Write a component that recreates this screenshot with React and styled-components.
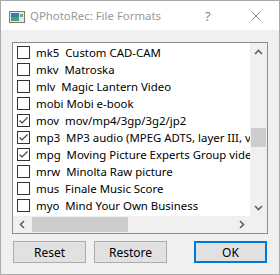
import React from 'react';
import styled, { createGlobalStyle } from 'styled-components';

const formats = [
  { ext: 'mk5', desc: 'Custom CAD-CAM', on: false },
  { ext: 'mkv', desc: 'Matroska', on: false },
  { ext: 'mlv', desc: 'Magic Lantern Video', on: false },
  { ext: 'mobi', desc: 'Mobi e-book', on: false },
  { ext: 'mov', desc: 'mov/mp4/3gp/3g2/jp2', on: true },
  { ext: 'mp3', desc: 'MP3 audio (MPEG ADTS, layer III, v1)', on: true },
  { ext: 'mpg', desc: 'Moving Picture Experts Group video', on: true },
  { ext: 'mrw', desc: 'Minolta Raw picture', on: false },
  { ext: 'mus', desc: 'Finale Music Score', on: false },
  { ext: 'myo', desc: 'Mind Your Own Business', on: false },
];

const App = () => {
  return (
    <>
      <GlobalStyle />
      <Window>
        <TitleBar>
          <AppIcon width="16" height="12" viewBox="0 0 16 12">
            <rect x="0.5" y="0.5" width="15" height="11" fill="#e8e8e8" stroke="#7a7a7a" />
            <rect x="2" y="2" width="8" height="8" fill="#3a7bb8" />
            <rect x="2" y="6" width="8" height="4" fill="#4aa36a" />
            <rect x="11" y="3" width="3" height="3" fill="#5dbb5d" />
          </AppIcon>
          <Title>QPhotoRec: File Formats</Title>
          <TitleButton>?</TitleButton>
          <CloseButton>
            <svg width="10" height="10" viewBox="0 0 10 10">
              <path d="M0.5 0.5 L9.5 9.5 M9.5 0.5 L0.5 9.5" stroke="#8a8a8a" strokeWidth="1" />
            </svg>
          </CloseButton>
        </TitleBar>
        <Body>
          <ListBox>
            <ListMain>
              <Rows>
                {formats.map((f) => (
                  <Row key={f.ext}>
                    <CheckBox>
                      {f.on && (
                        <svg width="11" height="11" viewBox="0 0 11 11">
                          <path d="M1.5 5.5 L4 8 L9.5 2.5" fill="none" stroke="#3c3c3c" strokeWidth="1.1" />
                        </svg>
                      )}
                    </CheckBox>
                    <Label>{`${f.ext.padEnd(4)} ${f.desc}`}</Label>
                  </Row>
                ))}
              </Rows>
              <VScroll>
                <Arrow>
                  <svg width="9" height="6" viewBox="0 0 9 6">
                    <path d="M1 5 L4.5 1.5 L8 5" fill="none" stroke="#606060" strokeWidth="1.6" />
                  </svg>
                </Arrow>
                <VTrack>
                  <VThumb />
                </VTrack>
                <Arrow>
                  <svg width="9" height="6" viewBox="0 0 9 6">
                    <path d="M1 1 L4.5 4.5 L8 1" fill="none" stroke="#606060" strokeWidth="1.6" />
                  </svg>
                </Arrow>
              </VScroll>
            </ListMain>
            <HScroll>
              <Arrow>
                <svg width="6" height="9" viewBox="0 0 6 9">
                  <path d="M5 1 L1.5 4.5 L5 8" fill="none" stroke="#606060" strokeWidth="1.6" />
                </svg>
              </Arrow>
              <HTrack>
                <HThumb />
              </HTrack>
              <Arrow>
                <svg width="6" height="9" viewBox="0 0 6 9">
                  <path d="M1 1 L4.5 4.5 L1 8" fill="none" stroke="#606060" strokeWidth="1.6" />
                </svg>
              </Arrow>
              <Corner />
            </HScroll>
          </ListBox>
          <ButtonRow>
            <Button>Reset</Button>
            <Button>Restore</Button>
            <Spacer />
            <Button primary>OK</Button>
          </ButtonRow>
        </Body>
      </Window>
    </>
  );
};

export default App;

const GlobalStyle = createGlobalStyle`
  body {
    margin: 0;
    background: #ffffff;
    font-family: 'Noto Sans', 'Liberation Sans', sans-serif;
  }
`;

const Window = styled.div`
  width: 280px;
  height: 275px;
  box-sizing: border-box;
  border: 1px solid #aaaaaa;
  background: #f0f0f0;
  display: flex;
  flex-direction: column;
`;

const TitleBar = styled.div`
  height: 29px;
  background: #ffffff;
  display: flex;
  align-items: center;
  color: #999999;
  font-size: 11.4px;
`;

const AppIcon = styled.svg`
  margin-left: 8px;
  margin-top: 2px;
  flex: none;
`;

const Title = styled.span`
  margin-left: 5px;
  flex: 1;
  white-space: nowrap;
`;

const TitleButton = styled.span`
  width: 14px;
  font-size: 13px;
  color: #8a8a8a;
  margin-right: 32px;
`;

const CloseButton = styled.span`
  display: flex;
  margin-right: 18px;
`;

const Body = styled.div`
  flex: 1;
  display: flex;
  flex-direction: column;
  padding: 12px 11px 11px 11px;
  gap: 7px;
`;

const ListBox = styled.div`
  height: 192px;
  box-sizing: border-box;
  border: 1px solid #8c8c8c;
  background: #ffffff;
  display: flex;
  flex-direction: column;
`;

const ListMain = styled.div`
  flex: 1;
  display: flex;
  min-height: 0;
`;

const Rows = styled.div`
  flex: 1;
  min-width: 0;
  overflow: hidden;
  padding-top: 1px;
`;

const Row = styled.div`
  height: 17px;
  display: flex;
  align-items: center;
  padding-left: 4px;
`;

const CheckBox = styled.span`
  width: 13px;
  height: 13px;
  box-sizing: border-box;
  border: 1px solid #333333;
  background: #ffffff;
  flex: none;
  display: flex;
  align-items: center;
  justify-content: center;
`;

const Label = styled.span`
  margin-left: 6px;
  font-size: 11.4px;
  color: #000000;
  white-space: pre;
`;

const VScroll = styled.div`
  width: 17px;
  background: #f0f0f0;
  display: flex;
  flex-direction: column;
`;

const Arrow = styled.div`
  width: 17px;
  height: 17px;
  flex: none;
  display: flex;
  align-items: center;
  justify-content: center;
`;

const VTrack = styled.div`
  flex: 1;
  padding: 0 1px;
`;

const VThumb = styled.div`
  margin-top: 68px;
  height: 19px;
  background: #cdcdcd;
`;

const HScroll = styled.div`
  height: 17px;
  background: #f0f0f0;
  display: flex;
`;

const HTrack = styled.div`
  flex: 1;
  padding: 1px 0 1px 2px;
`;

const HThumb = styled.div`
  width: 96px;
  height: 100%;
  background: #cdcdcd;
`;

const Corner = styled.div`
  width: 17px;
  background: #f0f0f0;
`;

const ButtonRow = styled.div`
  display: flex;
  gap: 8px;
  padding: 0 1px;
`;

const Spacer = styled.div`
  flex: 1;
`;

const Button = styled.button`
  width: 73px;
  height: 22px;
  box-sizing: border-box;
  background: #e1e1e1;
  border: ${(p) => (p.primary ? '2px solid #0078d7' : '1px solid #adadad')};
  font-family: 'Noto Sans', 'Liberation Sans', sans-serif;
  font-size: 12px;
  color: #000000;
  padding: 0;
`;
